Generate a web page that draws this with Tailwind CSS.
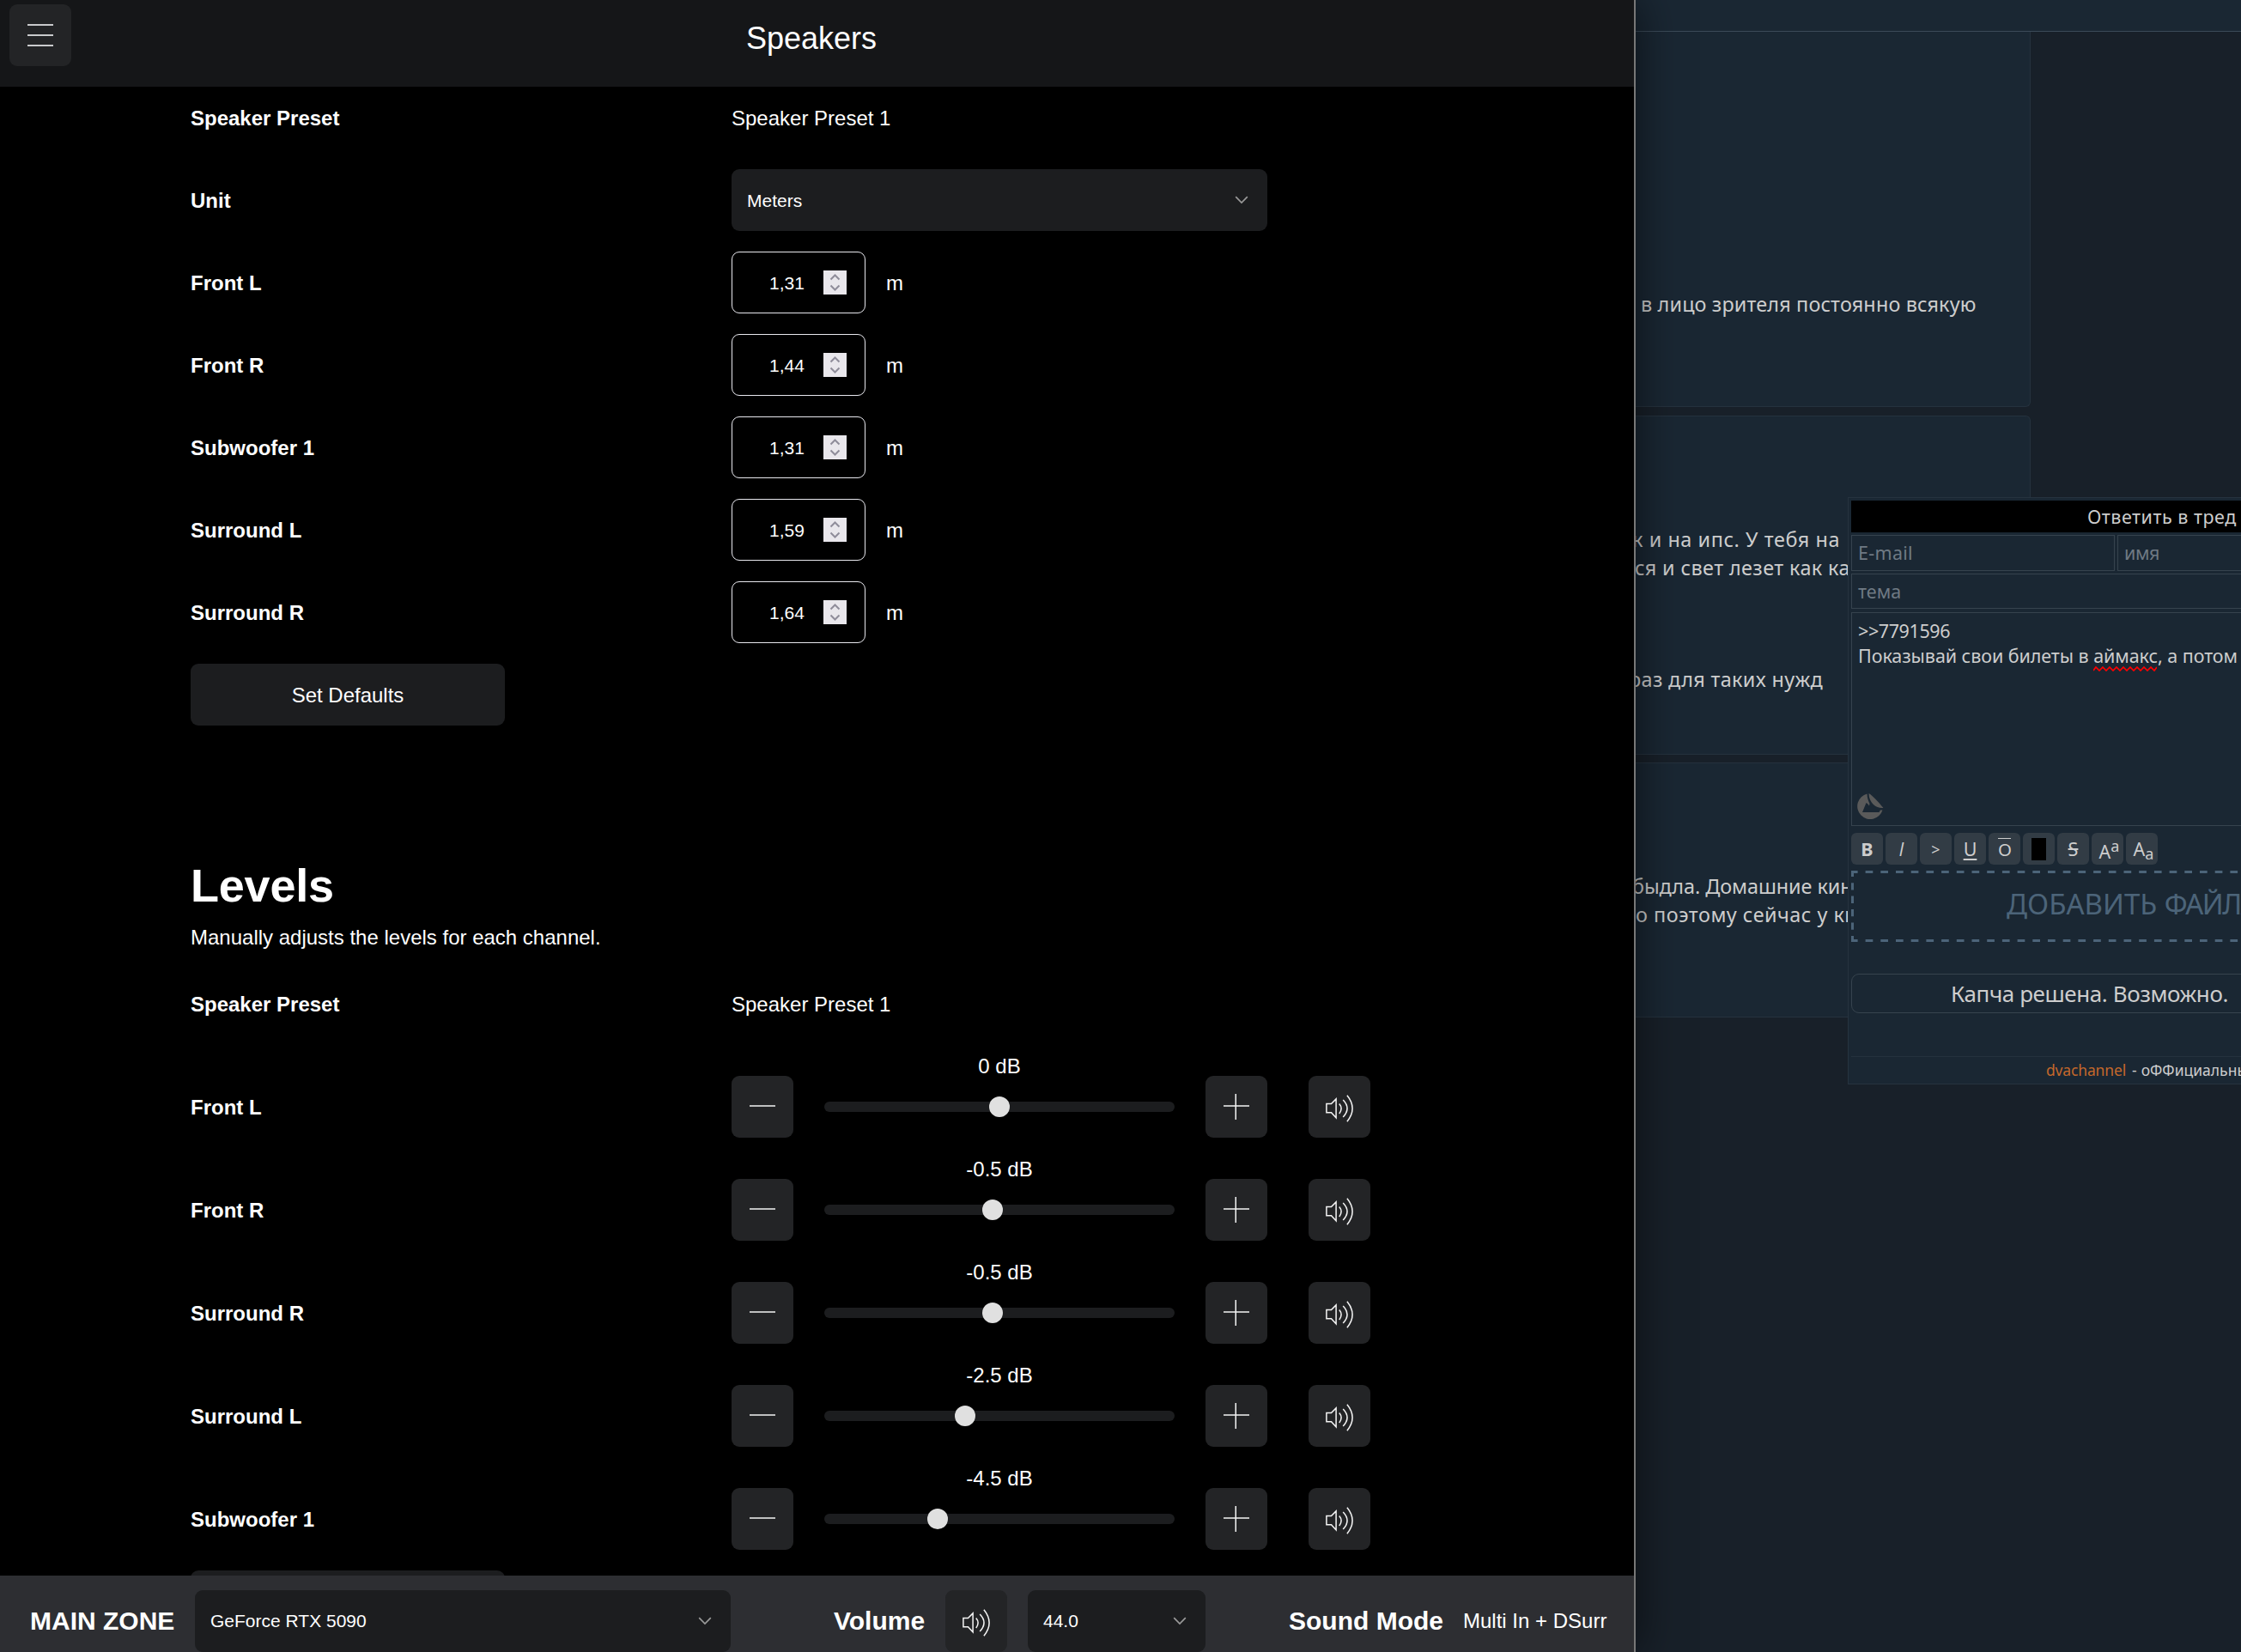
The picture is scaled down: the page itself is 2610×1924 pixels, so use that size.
<!DOCTYPE html>
<html lang="en">
<head>
<meta charset="utf-8">
<title>Speakers</title>
<script src="https://cdn.jsdelivr.net/npm/@tailwindcss/browser@4"></script>
</head>
<body class="bg-[#182029]">
<svg class="hidden">
  <symbol id="speaker" viewBox="0 0 32 32"><g fill="none" stroke="#f4f4f4" stroke-width="1.5"><path d="M.9 10.5h5.6l5.6-5.6v21.9l-5.6-6H.9z"/><path d="M15.8 10.6q4.6 5.4 0 11.4"/><path d="M20.2 6q9.6 9.8 0 20"/><path d="M24.9.8q12.4 15.200 0 30.4"/></g></symbol>
  <symbol id="chev" viewBox="0 0 16 10"><path d="M1.200 1.200 8 8l6.800-6.800" fill="none" stroke="#999" stroke-width="1.700"/></symbol>
  <symbol id="minus" viewBox="0 0 30 30"><path d="M0 14h30" stroke="#f4f4f4" stroke-width="1.500"/></symbol>
  <symbol id="plus" viewBox="0 0 30 30"><path d="M0 14h30M14.250 0v30" stroke="#f4f4f4" stroke-width="1.500"/></symbol>
</svg>
<div class="flex h-[1924px] w-[2610px] overflow-hidden">
  <!-- receiver setup window -->
  <section class="z-20 flex h-full w-[1905px] shrink-0 flex-col border-r-2 border-[#777] bg-black font-['Liberation_Sans',Arial,sans-serif] text-2xl text-white shadow-[0_0_50px_rgba(0,0,0,0.6)]">
    <header class="flex h-[101px] shrink-0 items-start bg-[#151618] pt-[5px] pl-[11px]">
      <button class="flex size-[72px] flex-col items-center justify-center gap-2.5 rounded-[9px] bg-[#232426]">
        <span class="h-0.5 w-[30px] bg-[#c9cacc]"></span><span class="h-0.5 w-[30px] bg-[#c9cacc]"></span><span class="h-0.5 w-[30px] bg-[#c9cacc]"></span>
      </button>
      <h1 class="ml-[786px] text-4xl leading-[80px]">Speakers</h1>
    </header>
    <main class="min-h-0 flex-1 overflow-hidden pl-[222px]">
      <div id="distances" class="grid auto-rows-[72px] grid-cols-[630px_1fr] items-start gap-y-6 leading-[74px]"></div>
      <button class="mt-6 block h-[72px] w-[366px] rounded-[9px] bg-[#1c1d1f] pt-0.5">Set Defaults</button>
      <h2 class="mt-[151px] text-[54px] leading-[70px] font-bold tracking-[-0.2px]">Levels</h2>
      <p class="mt-[8px] leading-9">Manually adjusts the levels for each channel.</p>
      <div class="mt-[23px] grid h-[72px] grid-cols-[630px_1fr] leading-[74px]"><b>Speaker Preset</b><span>Speaker Preset 1</span></div>
      <div id="levels" class="grid gap-y-4 pt-[16px]"></div>
      <div class="mt-6 h-[72px] w-[366px] rounded-[9px] bg-[#1c1d1f]"></div>
    </main>
    <footer class="flex h-[89px] shrink-0 items-center overflow-hidden bg-[#2d2e32] pt-[17px] pl-[35px] leading-[72px] whitespace-nowrap">
      <b class="w-[192px] text-3xl leading-[72px]">MAIN ZONE</b>
      <div class="flex h-[72px] w-[624px] items-center justify-between rounded-[9px] bg-[#1c1d1f] pr-[22px] pl-[18px] text-[21px]">GeForce RTX 5090<svg class="h-2.5 w-4"><use href="#chev"/></svg></div>
      <b class="ml-[120px] w-[130px] text-3xl leading-[72px]">Volume</b>
      <button class="flex size-[72px] items-center justify-center rounded-[9px] bg-[#232426]"><svg class="mt-[3px] size-8"><use href="#speaker"/></svg></button>
      <div class="ml-6 flex h-[72px] w-[207px] items-center justify-between rounded-[9px] bg-[#1c1d1f] pr-[22px] pl-[18px] text-[21px]">44.0<svg class="h-2.5 w-4"><use href="#chev"/></svg></div>
      <b class="ml-[97px] w-[203px] text-3xl leading-[72px]">Sound Mode</b>
      <span>Multi In + DSurr</span>
    </footer>
  </section>

  <!-- thread page behind -->
  <section class="relative h-full min-w-0 flex-1 overflow-hidden bg-[#182029] font-['Noto_Sans',sans-serif] text-[23.400px] leading-[33px] whitespace-nowrap text-[#cdcdcd]">
    <div class="h-[37px] border-b border-[#3b4a58] bg-[#1a2733]"></div>
    <article class="h-[437px] w-[460px] rounded-br-md border-r border-b border-[#25323e] bg-[#1a2733] pt-[301px] pl-[6px]"><p class="tracking-[0.15px]">в лицо зрителя постоянно всякую</p></article>
    <article class="mt-2.5 h-[395px] w-[460px] rounded-r-md border-y border-r border-[#25323e] bg-[#1a2733] pt-[127px]">
      <p class="-ml-1 tracking-[0.58px]">к и на ипс. У тебя на</p>
      <p class="-ml-px tracking-[0.41px]">ся и свет лезет как ка</p>
      <p class="-ml-2 pt-[97px] tracking-[0.34px]">раз для таких нужд</p>
    </article>
    <article class="mt-[9px] h-[297px] w-[460px] rounded-r-md border-y border-r border-[#25323e] bg-[#1a2733] pt-[127px]">
      <p class="-ml-1 tracking-[-0.05px]">быдла. Домашние кин</p>
      <p class="tracking-[0.5px]">о поэтому сейчас у ки</p>
    </article>

    <!-- floating reply form -->
    <form class="absolute top-[579px] left-[247px] flex h-[684px] w-[560px] flex-col border border-[#26333f] bg-[#1a2733] pt-[3px] pl-[3px] text-[21.500px]">
      <div class="h-[37px] shrink-0 bg-black pl-[275px] leading-[37px] tracking-[0.5px]">Ответить в тред</div>
      <div class="mt-[3px] flex shrink-0 gap-[3px] leading-10 text-[#6f7a84]">
        <div class="h-[42px] w-[307px] shrink-0 border border-[#36434e] pl-[7px] tracking-[0.3px]">E-mail</div>
        <div class="h-[42px] w-[307px] shrink-0 border border-[#36434e] pl-[7px] tracking-[-0.4px]">имя</div>
      </div>
      <div class="mt-[3px] h-[41px] shrink-0 border border-[#36434e] pl-[7px] leading-10 text-[#6f7a84]">тема</div>
      <div class="relative mt-[4px] h-[249px] shrink-0 border border-[#36434e] pt-[6px] pl-[7px] leading-[29px]">
        <p class="tracking-[-0.4px]">&gt;&gt;7791596</p>
        <p class="tracking-[-0.07px]">Показывай свои билеты в <span class="relative">аймакс<svg class="absolute top-[27px] left-0 h-[6px] w-[74px]"><path d="M0 5l3-4 4 4 4-4 4 4 4-4 4 4 4-4 4 4 4-4 4 4 4-4 4 4 4-4 4 4 4-4 4 4 4-4 4 4 3-4" fill="none" stroke="#f00" stroke-width="1.700"/></svg></span>, а потом</p>
        <svg class="absolute top-[210px] left-[6px] size-[31px]" viewBox="0 0 31 31" fill="#5a5a5a"><path d="M11.500 .5A15 15 0 1 0 29.500 19.500H27l-1.500 2.500H6l4.500-11 2 1.500 1.500 2 .5-2.500C13 9 11.500 5 11.500.5z"/><path d="M13.500 0c4 2 12 11 17 17-7 1-17-5-17-17z"/></svg>
      </div>
      <div class="mt-2 flex shrink-0 gap-[3px] text-center leading-[37px]">
        <span class="size-[37px] rounded-md bg-[#323c45] font-bold">B</span>
        <span class="size-[37px] rounded-md bg-[#323c45] font-['Open_Sans'] italic">I</span>
        <span class="size-[37px] rounded-md bg-[#323c45] text-lg leading-[39px]">&gt;</span>
        <span class="size-[37px] rounded-md bg-[#323c45] underline underline-offset-3">U</span>
        <span class="flex size-[37px] flex-col items-center rounded-md bg-[#323c45] pt-1.5"><i class="h-[28px] w-[15px] border-t border-[#cdcdcd] text-[20.500px] leading-[25px] not-italic">O</i></span>
        <span class="flex size-[37px] items-center justify-center rounded-md bg-[#323c45]"><i class="h-[26px] w-[17px] bg-black"></i></span>
        <span class="size-[37px] rounded-md bg-[#323c45] line-through">S</span>
        <span class="flex size-[37px] justify-center rounded-md bg-[#323c45] pt-[3px] pl-1">A<i class="-mt-[6px] text-[18px] not-italic">a</i></span>
        <span class="flex size-[37px] justify-center rounded-md bg-[#323c45] pl-1">A<i class="mt-[6px] text-[18px] not-italic">a</i></span>
      </div>
      <div class="relative mt-[7px] h-[83px] shrink-0 pl-[181px] text-[33px] leading-[78px] text-[#4c6479]">ДОБАВИТЬ <span class="tracking-[-1.5px]">ФАЙЛА</span>
        <svg class="absolute inset-0 h-[83px] w-[600px]" fill="none" stroke="#4c6479" stroke-width="3"><path d="M-1.100 1.500H600" stroke-dasharray="8.700 9"/><path d="M-1.100 81.500H600" stroke-dasharray="8.700 9"/><path d="M1.500-1.300V83" stroke-dasharray="8.300 7.150"/></svg>
      </div>
      <div class="mt-[37px] h-[46px] shrink-0 rounded-[9px] border border-[#36434e] pl-[115px] text-[26px] leading-[44px] tracking-[-0.42px]">Капча решена. Возможно.</div>
      <div class="mt-[50px] shrink-0 border-t border-[#25323e] pl-[227px] text-[17.500px] leading-[30px]"><span class="tracking-[-0.15px] text-[#c4682b]">dvachannel</span><span class="pl-[7px]">-</span><span class="pl-[5px]">оФФициальный</span></div>
    </form>
  </section>
</div>
<script>
const distances = [["Front L","1,31"],["Front R","1,44"],["Subwoofer 1","1,31"],["Surround L","1,59"],["Surround R","1,64"]];
document.getElementById("distances").innerHTML =
  `<b>Speaker Preset</b><span>Speaker Preset 1</span>
   <b>Unit</b><div class="flex h-[72px] w-[624px] items-center justify-between rounded-[9px] bg-[#1c1d1f] pr-[22px] pl-[18px] text-[21px]"><span class="pt-px">Meters</span><svg class="h-2.5 w-4"><use href="#chev"/></svg></div>` +
  distances.map(([n, v]) => `<b>${n}</b><div class="flex h-[72px] items-start"><div class="flex h-[72px] w-[156px] items-center justify-between rounded-[9px] border border-[#e8e8ee] pr-[21px] pl-[43px] text-[21px]"><span class="pt-px">${v}</span>
    <svg class="h-[28px] w-[27px] bg-[#e9e7ec]" viewBox="0 0 27 28"><path d="M8.500 10.500l5-5 5 5M8.500 17.500l5 5 5-5" fill="none" stroke="#8f8d9a" stroke-width="2"/></svg></div><span class="pl-6">m</span></div>`).join("");
const levels = [["Front L","0 dB",192],["Front R","-0.5 dB",184],["Surround R","-0.5 dB",184],["Surround L","-2.5 dB",152],["Subwoofer 1","-4.5 dB",120]];
document.getElementById("levels").innerHTML = levels.map(([n, v, x]) => `<div class="grid h-[104px] grid-cols-[630px_72px_408px_72px_72px]">
  <b class="pt-8 leading-[74px]">${n}</b>
  <button class="mt-8 flex size-[72px] items-center justify-center rounded-[9px] bg-[#232426]"><svg class="size-[30px]"><use href="#minus"/></svg></button>
  <div class="ml-9 w-[408px]"><div class="text-center leading-[42px]">${v}</div>
    <div class="relative mt-5 h-3 rounded-full bg-[#1c1d1f]"><i class="absolute -top-1.5 size-6 rounded-full bg-[#e0e0e0]" style="left:${x}px"></i></div></div>
  <button class="mt-8 ml-[72px] flex size-[72px] items-center justify-center rounded-[9px] bg-[#232426]"><svg class="size-[30px]"><use href="#plus"/></svg></button>
  <button class="mt-8 ml-[120px] flex size-[72px] items-center justify-center rounded-[9px] bg-[#232426]"><svg class="mt-[3px] size-8"><use href="#speaker"/></svg></button>
</div>`).join("");
</script>
</body>
</html>
